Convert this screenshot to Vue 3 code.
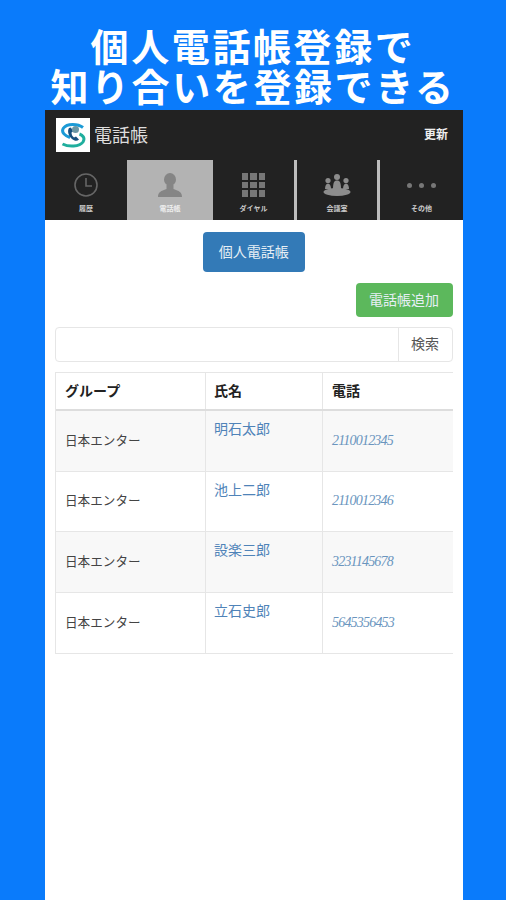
<script setup>
const tabs = [
  { key: 'clock', label: '履歴' },
  { key: 'person', label: '電話帳', active: true },
  { key: 'grid', label: 'ダイヤル' },
  { key: 'room', label: '会議室' },
  { key: 'more', label: 'その他' },
]
const rows = [
  { name: '明石太郎', tel: '2110012345' },
  { name: '池上二郎', tel: '2110012346' },
  { name: '設楽三郎', tel: '3231145678' },
  { name: '立石史郎', tel: '5645356453' },
]
const cells = [0, 1, 2, 3, 4, 5, 6, 7, 8]
</script>

<template>
  <div class="screen">
    <h1 class="title">
      <span>個人電話帳登録で</span>
      <span>知り合いを登録できる</span>
    </h1>
    <div class="phone">
      <header class="bar">
        <div class="logo">
          <svg width="26" height="26" viewBox="0 0 26 26">
            <path d="M23 5.500C18 1.500 7 1 3.500 6c-3 4.500 2 8 6.500 9.500" fill="none" stroke="#1b9ad6" stroke-width="3" />
            <path d="M2.500 22c6 3 17 3 20.500-2 2.500-4-.5-7-3.500-8" fill="none" stroke="#1fae9d" stroke-width="3" />
            <path d="M9 6c-2 3-.5 8 3 11 2.500 2 5 2.500 7 .5l-3-3-2 1c-1.500-1-2.500-3-2.500-5l1.500-1-2-4z" fill="#17507f" />
            <circle cx="15.500" cy="7.500" r="3.500" fill="#6c97a4" />
          </svg>
        </div>
        <span class="bar-title">電話帳</span>
        <span class="refresh">更新</span>
      </header>
      <nav class="tabs">
        <div v-for="t in tabs" :key="t.key" class="tab" :class="{ active: t.active }">
          <svg v-if="t.key === 'clock'" class="ico" width="26" height="26" viewBox="0 0 26 26">
            <circle cx="13" cy="13" r="11" fill="none" stroke="#666" stroke-width="1.6" />
            <path d="M13 6v8h6" fill="none" stroke="#666" stroke-width="1.6" />
          </svg>
          <svg v-else-if="t.key === 'person'" class="ico" width="26" height="26" viewBox="0 0 26 26">
            <ellipse cx="13" cy="7.500" rx="6" ry="6.500" fill="#858585" />
            <path d="M1 25c0-5 3-6 8.500-8v-4h7v4c5.500 2 8.500 3 8.500 8z" fill="#858585" />
          </svg>
          <div v-else-if="t.key === 'grid'" class="grid ico">
            <i v-for="c in cells" :key="c"></i>
          </div>
          <svg v-else-if="t.key === 'room'" class="ico" width="28" height="26" viewBox="0 0 28 26">
            <circle cx="14" cy="5" r="3" fill="#8c8c8c" />
            <path d="M10 17c0-6 1-8.500 4-8.500s4 2.500 4 8.500z" fill="#8c8c8c" />
            <circle cx="5" cy="8.500" r="2.600" fill="#8c8c8c" />
            <path d="M2 17c0-3 1-5.500 3-5.500s3 2.500 3 5.500z" fill="#8c8c8c" />
            <circle cx="23" cy="8.500" r="2.600" fill="#8c8c8c" />
            <path d="M20 17c0-3 1-5.500 3-5.500s3 2.500 3 5.500z" fill="#8c8c8c" />
            <ellipse cx="14" cy="20" rx="13.500" ry="4" fill="#8c8c8c" />
          </svg>
          <div v-else class="dots ico"><i></i><i></i><i></i></div>
          <span class="tab-label">{{ t.label }}</span>
        </div>
      </nav>
      <main class="content">
        <div class="center"><button class="btn blue">個人電話帳</button></div>
        <div class="right"><button class="btn green">電話帳追加</button></div>
        <div class="search">
          <div class="search-input"></div>
          <div class="search-btn">検索</div>
        </div>
        <div class="table">
          <div class="row head">
            <div class="c c1">グループ</div>
            <div class="c c2">氏名</div>
            <div class="c c3">電話</div>
          </div>
          <div v-for="r in rows" :key="r.tel" class="row body">
            <div class="c c1">日本エンター</div>
            <div class="c c2 link">{{ r.name }}</div>
            <div class="c c3 tel">{{ r.tel }}</div>
          </div>
        </div>
      </main>
    </div>
  </div>
</template>

<style scoped>
.screen {
  width: 506px;
  height: 900px;
  background: #0a7bfb;
  display: flex;
  flex-direction: column;
  overflow: hidden;
  font-family: "Noto Sans CJK JP", "Liberation Sans", sans-serif;
}
.title {
  margin: 0;
  padding: 25px 0 5px;
  display: flex;
  flex-direction: column;
  align-items: center;
  color: #fff;
  font-size: 38px;
  font-weight: 700;
  line-height: 40px;
  letter-spacing: 2.600px;
  white-space: nowrap;
}
.phone {
  flex: 1;
  margin: 0 43px 0 45px;
  background: #fff;
  display: flex;
  flex-direction: column;
}
.bar {
  height: 50px;
  background: #222;
  display: flex;
  align-items: center;
  padding: 0 15px 0 11px;
  color: #e8e8e8;
}
.logo {
  width: 34px;
  height: 34px;
  background: #fff;
  display: flex;
  align-items: center;
  justify-content: center;
  margin-right: 4px;
}
.bar-title {
  font-size: 18px;
  flex: 1;
  color: #ddd;
  padding-bottom: 2px;
}
.refresh {
  font-size: 12px;
  font-weight: 700;
  color: #eee;
  padding-bottom: 3px;
}
.tabs {
  height: 60px;
  background: #222;
  display: flex;
}
.tab {
  display: flex;
  flex-direction: column;
  align-items: center;
  padding-top: 12px;
  border-right: 3px solid #bdbdbd;
  box-sizing: border-box;
}
.tab:nth-child(1) {
  width: 82px;
  border-right: 0;
}
.tab:nth-child(2) {
  width: 86px;
  border-right: 0;
}
.tab:nth-child(3) {
  width: 84px;
}
.tab:nth-child(4) {
  width: 83px;
}
.tab:nth-child(5) {
  width: 83px;
  border-right: 0;
}
.tab.active {
  background: #b3b3b3;
}
.ico {
  height: 26px;
  flex: none;
}
.tab-label {
  margin-top: 5px;
  font-size: 7px;
  line-height: 10px;
  font-weight: 700;
  color: #ccc;
  white-space: nowrap;
}
.tab.active .tab-label {
  color: #eee;
}
.grid {
  width: 24px;
  height: 24px;
  margin-top: 1px;
  margin-bottom: 1px;
  display: grid;
  grid-template-columns: repeat(3, 1fr);
  gap: 2px;
}
.grid i {
  background: #777;
}
.dots {
  display: flex;
  align-items: center;
  gap: 7px;
}
.dots i {
  width: 5px;
  height: 5px;
  border-radius: 50%;
  background: #777;
}
.content {
  padding: 12px 10.500px 0 10px;
  display: flex;
  flex-direction: column;
}
.center {
  display: flex;
  justify-content: center;
}
.right {
  display: flex;
  justify-content: flex-end;
  margin-top: 11px;
}
.btn {
  border: 0;
  color: #e6eff5;
  font-family: inherit;
  font-size: 14px;
  border-radius: 4px;
  padding: 0 0 3px;
}
.blue {
  width: 102px;
  height: 40px;
  background: #337ab7;
}
.green {
  width: 97px;
  height: 34px;
  background: #5cb85c;
}
.search {
  margin-top: 10px;
  height: 35px;
  border: 1px solid #e6e6e6;
  border-radius: 4px;
  display: flex;
  box-sizing: border-box;
}
.search-input {
  flex: 1;
}
.search-btn {
  width: 54px;
  border-left: 1px solid #e6e6e6;
  display: flex;
  align-items: center;
  justify-content: center;
  font-size: 14px;
  color: #555;
  padding-bottom: 3px;
  box-sizing: border-box;
}
.table {
  margin-top: 10px;
  border: 1px solid #e6e6e6;
  border-right: 0;
  font-size: 12.600px;
  color: #444;
}
.row {
  display: flex;
}
.head {
  height: 38px;
  box-sizing: border-box;
  border-bottom: 2px solid #ddd;
  font-size: 14px;
  font-weight: 700;
  color: #222;
}
.head .c {
  padding-bottom: 3px;
}
.body {
  height: 60.600px;
  box-sizing: border-box;
  border-bottom: 1px solid #e6e6e6;
}
.body:last-child {
  border-bottom: 0;
}
.body:nth-child(even) {
  background: #f8f8f8;
}
.body .c1 {
  padding-bottom: 3px;
}
.c {
  display: flex;
  align-items: center;
  box-sizing: border-box;
  white-space: nowrap;
}
.c1 {
  width: 150px;
  padding-left: 9px;
  border-right: 1px solid #e6e6e6;
}
.c2 {
  width: 117px;
  padding-left: 8px;
  border-right: 1px solid #e6e6e6;
}
.c3 {
  flex: 1;
  padding-left: 9px;
}
.link {
  align-items: flex-start;
  padding-top: 7px;
  font-size: 14px;
  line-height: 20px;
  color: #4f83b8;
}
.tel {
  font-family: "Liberation Serif", serif;
  font-style: italic;
  font-size: 14px;
  letter-spacing: -0.800px;
  color: #6a95be;
}
</style>
